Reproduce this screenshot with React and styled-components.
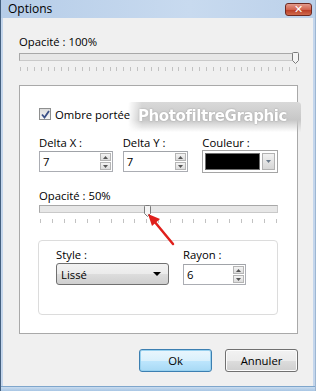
import React from 'react';
import styled, { createGlobalStyle } from 'styled-components';

const GlobalStyle = createGlobalStyle`
    html, body {
        margin: 0;
        padding: 0;
        background: #f0f0f0;
    }
    body {
        font-family: 'Open Sans', 'Noto Sans', sans-serif;
        font-size: 11.3px;
        color: #000;
    }
`

const Window = styled.div`
    display: flex;
    flex-direction: column;
    width: 316px;
    height: 391px;
    box-sizing: border-box;
    background: #f0f0f0;
    border-left: 1px solid #44607f;
    border-right: 1px solid #9db6d2;
    box-shadow: inset 2px 0 0 #c4d6ec, inset -2px 0 0 #c4d6ec;
`

const TitleBar = styled.div`
    display: flex;
    align-items: center;
    justify-content: space-between;
    height: 18px;
    padding: 0 3px 0 7px;
    background: linear-gradient(to right, #b6cde8, #c8daef 60%, #bcd1ea);
    font-size: 12px;
    line-height: 16px;
`

const CloseButton = styled.div`
    display: flex;
    align-items: center;
    justify-content: center;
    width: 27px;
    height: 13px;
    margin-top: 1px;
    border: 1px solid #6d2a22;
    border-radius: 3px;
    background: linear-gradient(#e29a8c, #d2644f 50%, #b83a24 51%, #cf6a4c);
    color: #fff;
    font-family: 'DejaVu Sans', sans-serif;
    font-weight: bold;
    font-size: 11px;
    line-height: 1;
    box-sizing: border-box;
`

const Body = styled.div`
    display: flex;
    flex-direction: column;
    flex: 1;
    padding: 16px 17px 0 18px;
`

const Label = styled.div`
    line-height: 16px;
    height: 16px;
    white-space: nowrap;
`

const SliderWrap = styled.div`
    position: relative;
    height: 21px;
    margin-top: ${p => (p.tight ? 0 : 2)}px;
`

const Track = styled.div`
    height: 8px;
    margin-top: 1px;
    box-sizing: border-box;
    border: 1px solid #c9c9c9;
    border-top-color: #a8a8a8;
    border-left-color: #a8a8a8;
    background: #e7e7e7;
`

const Thumb = styled.svg`
    position: absolute;
    top: 0;
    margin-left: -3px;
`

const Ticks = styled.div`
    display: flex;
    justify-content: space-between;
    margin-top: 6px;
    padding: 0 1px;
`

const Tick = styled.span`
    width: 1px;
    height: 4px;
    background: #c2c2c2;
`

const Panel = styled.div`
    position: relative;
    display: flex;
    flex-direction: column;
    margin-top: 12px;
    height: 249px;
    box-sizing: border-box;
    border: 1px solid #a9a9a9;
    background: #fff;
    padding: 21px 19px 0 19px;
`

const CheckRow = styled.div`
    display: flex;
    align-items: center;
    gap: 4px;
    height: 14px;
`

const CheckBox = styled.span`
    display: flex;
    align-items: center;
    justify-content: center;
    width: 12px;
    height: 12px;
    box-sizing: border-box;
    border: 1px solid #8e8f8f;
    background: linear-gradient(#dcdcdc, #f6f6f6);
`

const Watermark = styled.div`
    position: absolute;
    left: 108px;
    top: 16px;
    width: 173px;
    height: 30px;
    display: flex;
    align-items: flex-start;
    padding: 5px 0 0 10px;
    box-sizing: border-box;
    border-radius: 3px 3px 0 0;
    background: linear-gradient(#d9d9d9, #c7c7c7 60%, rgba(215, 215, 215, 0));
    -webkit-mask-image: linear-gradient(to right, transparent, #000 14px);
    mask-image: linear-gradient(to right, transparent, #000 14px);
    color: #fff;
    font-family: 'DejaVu Sans', sans-serif;
    font-weight: bold;
    font-size: 15px;
    letter-spacing: -0.4px;
    text-shadow: 0 0 1px #9a9a9a, 0 0 2px #b0b0b0;
`

const FieldRow = styled.div`
    display: flex;
    margin-top: 14px;
`

const Field = styled.div`
    display: flex;
    flex-direction: column;
    width: ${p => p.width}px;
    margin-right: ${p => p.gap || 0}px;
`

const SpinBox = styled.div`
    display: flex;
    align-items: center;
    height: 21px;
    margin-top: ${p => p.offset || 0}px;
    box-sizing: border-box;
    border: 1px solid #abadb3;
    border-top-color: #a0a3a8;
    background: #fff;
    padding-left: 3px;
`

const SpinValue = styled.span`
    flex: 1;
`

const SpinButtons = styled.div`
    display: flex;
    flex-direction: column;
    gap: 1px;
    margin-right: 1px;
`

const SpinArrow = styled.div`
    display: flex;
    align-items: center;
    justify-content: center;
    width: 11px;
    height: 8px;
    box-sizing: border-box;
    border: 1px solid #b5b5b5;
    background: linear-gradient(#f3f3f3, #dcdcdc);
`

const ColorPicker = styled.div`
    display: flex;
    align-items: center;
    height: 23px;
    margin-top: -1px;
    box-sizing: border-box;
    border: 1px solid #a5a5a5;
    padding: 2px;
    gap: 2px;
    background: #fff;
`

const Swatch = styled.div`
    flex: 1;
    height: 100%;
    box-sizing: border-box;
    border: 1px solid #707070;
    background: ${p => p.color};
`

const DropButton = styled.div`
    display: flex;
    align-items: center;
    justify-content: center;
    width: 13px;
    height: 100%;
    box-sizing: border-box;
    border: 1px solid #b2b2b2;
    background: linear-gradient(#f2f2f2, #d6d6d6);
`

const InnerSlider = styled.div`
    margin-top: 15px;
`

const GroupBox = styled.div`
    display: flex;
    gap: 14px;
    margin: 14px 0 0 -1px;
    height: 75px;
    box-sizing: border-box;
    border: 1px solid #dcdcdc;
    border-radius: 4px;
    padding: 6px 0 0 17px;
`

const Select = styled.div`
    display: flex;
    align-items: center;
    justify-content: space-between;
    height: 22px;
    box-sizing: border-box;
    border: 1px solid #707070;
    border-radius: 3px;
    padding: 0 7px 0 4px;
    background: linear-gradient(#f2f2f2, #ebebeb 50%, #dddddd 51%, #cfcfcf);
`

const Footer = styled.div`
    display: flex;
    justify-content: flex-end;
    gap: 13px;
    margin-top: 15px;
`

const Button = styled.div`
    display: flex;
    align-items: center;
    justify-content: center;
    width: 73px;
    height: 23px;
    box-sizing: border-box;
    border: 1px solid ${p => (p.primary ? '#3c7fb1' : '#707070')};
    border-radius: 3px;
    background: ${p => (p.primary
        ? 'linear-gradient(#eaf6fd, #d9f0fc 50%, #bee6fd 51%, #a7d9f5)'
        : 'linear-gradient(#f2f2f2, #ebebeb 50%, #dddddd 51%, #cfcfcf)')};
    box-shadow: ${p => (p.primary ? 'inset 0 0 0 1px #98d1ef' : 'inset 0 0 0 1px #fcfcfc')};
`

const BottomEdge = styled.div`
    height: 4px;
    margin-top: auto;
    background: linear-gradient(#c9dcef, #a8c6e4);
    border-top: 1px solid #7fa6cc;
`

const Arrow = styled.svg`
    position: absolute;
    left: 126px;
    top: 126px;
`

function Slider({ value, ticks, tight }) {
    return (
        <SliderWrap tight={tight}>
            <Track />
            <Thumb width="7" height="12" viewBox="0 0 7 12" style={{ left: `${value}%` }}>
                <path d="M0.5 1.5 Q0.5 0.5 1.5 0.5 H5.5 Q6.5 0.5 6.5 1.5 V8.5 L3.5 11.5 L0.5 8.5 Z"
                    fill="#f4f4f4" stroke="#7a7a7a" strokeWidth="1" />
            </Thumb>
            <Ticks>
                {Array.from({ length: ticks }).map((_, i) => <Tick key={i} />)}
            </Ticks>
        </SliderWrap>
    );
}

function Spin({ value, offset }) {
    return (
        <SpinBox offset={offset}>
            <SpinValue>{value}</SpinValue>
            <SpinButtons>
                <SpinArrow>
                    <svg width="5" height="3" viewBox="0 0 5 3"><path d="M2.5 0 L5 3 H0 Z" fill="#555" /></svg>
                </SpinArrow>
                <SpinArrow>
                    <svg width="5" height="3" viewBox="0 0 5 3"><path d="M0 0 H5 L2.5 3 Z" fill="#555" /></svg>
                </SpinArrow>
            </SpinButtons>
        </SpinBox>
    );
}

export default function App() {
    return (
        <Window>
            <GlobalStyle />
            <TitleBar>
                Options
                <CloseButton>✕</CloseButton>
            </TitleBar>
            <Body>
                <Label>Opacité : 100%</Label>
                <Slider value={99} ticks={41} />

                <Panel>
                    <CheckRow>
                        <CheckBox>
                            <svg width="9" height="9" viewBox="0 0 9 9">
                                <path d="M1 4.5 L3.5 7.5 L8 1" fill="none" stroke="#3a4f86" strokeWidth="1.8" />
                            </svg>
                        </CheckBox>
                        Ombre portée
                    </CheckRow>
                    <Watermark>PhotofiltreGraphic</Watermark>

                    <FieldRow>
                        <Field width={74} gap={10}>
                            <Label>Delta X :</Label>
                            <Spin value="7" />
                        </Field>
                        <Field width={66} gap={14}>
                            <Label>Delta Y :</Label>
                            <Spin value="7" />
                        </Field>
                        <Field width={76}>
                            <Label>Couleur :</Label>
                            <ColorPicker>
                                <Swatch color="#000" />
                                <DropButton>
                                    <svg width="5" height="3" viewBox="0 0 5 3"><path d="M0 0 H5 L2.5 3 Z" fill="#6b7a8a" /></svg>
                                </DropButton>
                            </ColorPicker>
                        </Field>
                    </FieldRow>

                    <InnerSlider>
                        <Label>Opacité : 50%</Label>
                        <Slider value={45} ticks={21} tight />
                    </InnerSlider>

                    <Arrow width="30" height="34" viewBox="0 0 30 34">
                        <path d="M27 32 L8 9" stroke="#e0201c" strokeWidth="2.5" strokeLinecap="round" />
                        <path d="M2 2 L14 7 L6 14 Z" fill="#e0201c" />
                    </Arrow>

                    <GroupBox>
                        <Field width={113}>
                            <Label>Style :</Label>
                            <Select>
                                Lissé
                                <svg width="8" height="4" viewBox="0 0 8 4"><path d="M0 0 H8 L4 4 Z" fill="#000" /></svg>
                            </Select>
                        </Field>
                        <Field width={63}>
                            <Label>Rayon :</Label>
                            <Spin value="6" offset={1} />
                        </Field>
                    </GroupBox>
                </Panel>

                <Footer>
                    <Button primary>Ok</Button>
                    <Button>Annuler</Button>
                </Footer>
            </Body>
            <BottomEdge />
        </Window>
    );
}
